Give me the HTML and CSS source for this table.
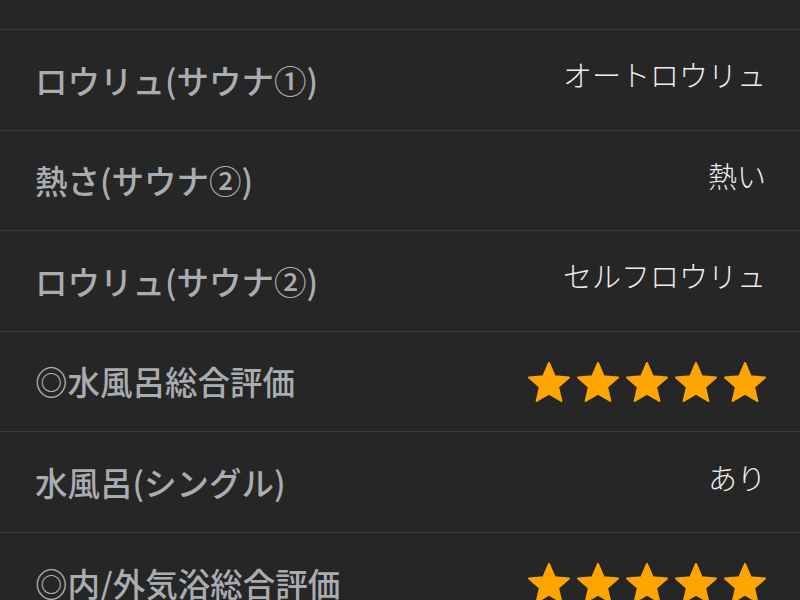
FILE: index.html
```html
<!DOCTYPE html>
<html lang="ja">
<head>
<meta charset="utf-8">
<link rel="stylesheet" href="styles.css">
</head>
<body>
<div class="list">
  <div class="row row-top"></div>
  <div class="row">
    <div class="label">ロウリュ(サウナ①)</div>
    <div class="value">オートロウリュ</div>
  </div>
  <div class="row">
    <div class="label">熱さ(サウナ②)</div>
    <div class="value">熱い</div>
  </div>
  <div class="row">
    <div class="label">ロウリュ(サウナ②)</div>
    <div class="value">セルフロウリュ</div>
  </div>
  <div class="row">
    <div class="label">◎水風呂総合評価</div>
    <div class="stars">
      <svg class="star" viewBox="0 0 24 24"><path d="M12 17.27L18.18 21l-1.64-7.03L22 9.24l-7.19-.61L12 2 9.19 8.63 2 9.24l5.46 4.73L5.82 21z"/></svg>
      <svg class="star" viewBox="0 0 24 24"><path d="M12 17.27L18.18 21l-1.64-7.03L22 9.24l-7.19-.61L12 2 9.19 8.63 2 9.24l5.46 4.73L5.82 21z"/></svg>
      <svg class="star" viewBox="0 0 24 24"><path d="M12 17.27L18.18 21l-1.64-7.03L22 9.24l-7.19-.61L12 2 9.19 8.63 2 9.24l5.46 4.73L5.82 21z"/></svg>
      <svg class="star" viewBox="0 0 24 24"><path d="M12 17.27L18.18 21l-1.64-7.03L22 9.24l-7.19-.61L12 2 9.19 8.63 2 9.24l5.46 4.73L5.82 21z"/></svg>
      <svg class="star" viewBox="0 0 24 24"><path d="M12 17.27L18.18 21l-1.64-7.03L22 9.24l-7.19-.61L12 2 9.19 8.63 2 9.24l5.46 4.73L5.82 21z"/></svg>
    </div>
  </div>
  <div class="row">
    <div class="label">水風呂(シングル)</div>
    <div class="value">あり</div>
  </div>
  <div class="row">
    <div class="label">◎内/外気浴総合評価</div>
    <div class="stars">
      <svg class="star" viewBox="0 0 24 24"><path d="M12 17.27L18.18 21l-1.64-7.03L22 9.24l-7.19-.61L12 2 9.19 8.63 2 9.24l5.46 4.73L5.82 21z"/></svg>
      <svg class="star" viewBox="0 0 24 24"><path d="M12 17.27L18.18 21l-1.64-7.03L22 9.24l-7.19-.61L12 2 9.19 8.63 2 9.24l5.46 4.73L5.82 21z"/></svg>
      <svg class="star" viewBox="0 0 24 24"><path d="M12 17.27L18.18 21l-1.64-7.03L22 9.24l-7.19-.61L12 2 9.19 8.63 2 9.24l5.46 4.73L5.82 21z"/></svg>
      <svg class="star" viewBox="0 0 24 24"><path d="M12 17.27L18.18 21l-1.64-7.03L22 9.24l-7.19-.61L12 2 9.19 8.63 2 9.24l5.46 4.73L5.82 21z"/></svg>
      <svg class="star" viewBox="0 0 24 24"><path d="M12 17.27L18.18 21l-1.64-7.03L22 9.24l-7.19-.61L12 2 9.19 8.63 2 9.24l5.46 4.73L5.82 21z"/></svg>
    </div>
  </div>
</div>
</body>
</html>
```

FILE: styles.css
```css
html, body {
  margin: 0;
  padding: 0;
  background: #262626;
  overflow: hidden;
}
.list {
  display: flex;
  flex-direction: column;
  font-family: "Noto Sans CJK JP", "Noto Sans", sans-serif;
}
.row {
  height: 99.6px;
  border-bottom: 1px solid #3a3a3a;
  display: flex;
  align-items: center;
  justify-content: space-between;
  padding: 0 35px;
  flex-shrink: 0;
}
.row-top {
  height: 29px;
}
.label {
  color: #a9adb1;
  font-weight: 500;
  font-size: 32.5px;
  line-height: 1;
  white-space: nowrap;
}
.value {
  color: #ececec;
  font-weight: 300;
  font-size: 29px;
  line-height: 1;
  padding-bottom: 10px;
  margin-right: -1px;
}
.stars {
  display: flex;
  gap: 1px;
  margin-right: -4px;
  margin-top: 2px;
}
.star {
  width: 48px;
  height: 48px;
  fill: #ffa500;
  stroke: #ffa500;
  stroke-width: 1;
  stroke-linejoin: round;
}
```
